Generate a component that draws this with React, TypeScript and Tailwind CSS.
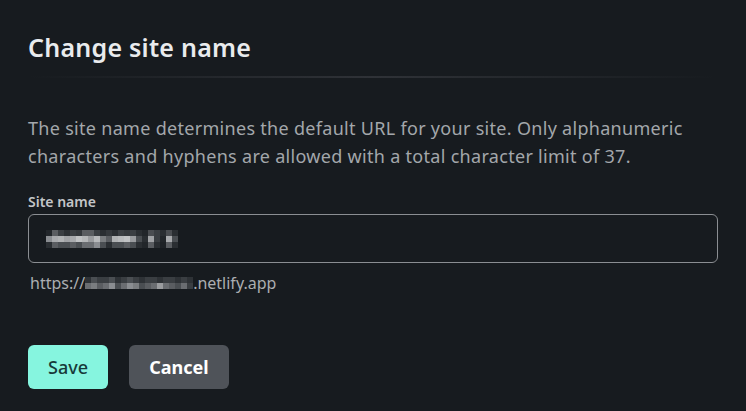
const nameBlocks = [
  ["#22262a", "#5a5d61", "#3a3e42", "#2c3034", "#3a3e42", "#34383c", "#5a5d61", "#5a5d61", "#3a3e42", "#2a2e32", "#34383c", "#2a2e32", "#3a3e42", "#34383c", "#3a3e42", "#2a2e32", "#22262a", "#4a4d51", "#3a3e42", "#2a2e32", "#4a4d51", "#2a2e32"],
  ["#8a8d91", "#a8aaad", "#b0b2b4", "#a0a2a5", "#a8aaad", "#c0c2c4", "#b5b7b9", "#9a9c9f", "#b8babc", "#7a7d80", "#5a5d61", "#b0b2b4", "#b8babc", "#c0c2c4", "#9a9c9f", "#4a4e52", "#2a2e32", "#a0a2a5", "#3a3e42", "#22262a", "#a8aaad", "#4a4e52"],
  ["#2a2e32", "#5a5d61", "#4a4e52", "#4a4e52", "#5a5d61", "#4a4e52", "#6a6d71", "#6a6d71", "#8a8d91", "#4a4e52", "#2a2e32", "#4a4e52", "#4a4e52", "#5a5d61", "#4a4e52", "#2a2e32", "#22262a", "#5a5d61", "#2a2e32", "#1e2226", "#5a5d61", "#2a2e32"],
];

const urlBlocks = [
  ["#2e3236", "#4a4e52", "#3a3e42", "#3a3e42", "#4a4e52", "#2e3236", "#3a3e42", "#4a4e52", "#3a3e42", "#2e3236", "#3a3e42", "#3a3e42", "#2e3236", "#3a3e42", "#3a3e42", "#2e3236", "#3a3e42", "#2e3236"],
  ["#6a6d71", "#7a7d80", "#5a5d61", "#6a6d71", "#8a8d91", "#4a4e52", "#6a6d71", "#8a8d91", "#7a7d80", "#4a4e52", "#5a5d61", "#6a6d71", "#9a9c9f", "#6a6d71", "#5a5d61", "#4a4e52", "#6a6d71", "#3a3e42"],
];

function Pixels({ rows, size }: { rows: string[][]; size: number }) {
  return (
    <span className="inline-flex flex-col align-middle">
      {rows.map((row, i) => (
        <span key={i} className="flex">
          {row.map((c, j) => (
            <span key={j} style={{ background: c, width: size, height: size }} />
          ))}
        </span>
      ))}
    </span>
  );
}

export default function App() {
  return (
    <div
      className="min-h-screen bg-[#171b1f] px-7 pt-[31px]"
      style={{ fontFamily: '"Segoe UI", "Noto Sans", sans-serif' }}
    >
      <h2 className="text-[25px] leading-8 font-semibold tracking-[0.25px] text-[#e9ebed]">Change site name</h2>
      <div className="mt-[13px] mr-[2px] h-[2px] bg-gradient-to-r from-transparent via-[#2f3237] to-transparent" />

      <p className="mt-[36px] text-[18px] leading-7 tracking-[0.3px] text-[#a3a7ab]">
        The site name determines the default URL for your site. Only alphanumeric characters and
        hyphens are allowed with a total character limit of 37.
      </p>

      <label className="mt-[22px] block text-sm leading-5 font-semibold text-[#c3c5c8]">Site name</label>
      <div className="mt-[2px] flex h-[49px] items-center rounded-md border border-[#8b8e92] pl-[17px]">
        <Pixels rows={nameBlocks} size={6} />
      </div>

      <div className="mt-2 flex items-center pl-[2px] text-base leading-6 text-[#abaeb1]">
        <span>https://</span>
        <Pixels rows={urlBlocks} size={6} />
        <span>.netlify.app</span>
      </div>

      <div className="mt-[50px] flex gap-[21px]">
        <button className="h-11 w-20 rounded-md bg-[#86f5df] text-[18px] font-medium text-[#173a3a]">Save</button>
        <button className="h-11 w-[100px] rounded-md bg-[#4f5359] text-[18px] font-bold text-white">Cancel</button>
      </div>
    </div>
  );
}
